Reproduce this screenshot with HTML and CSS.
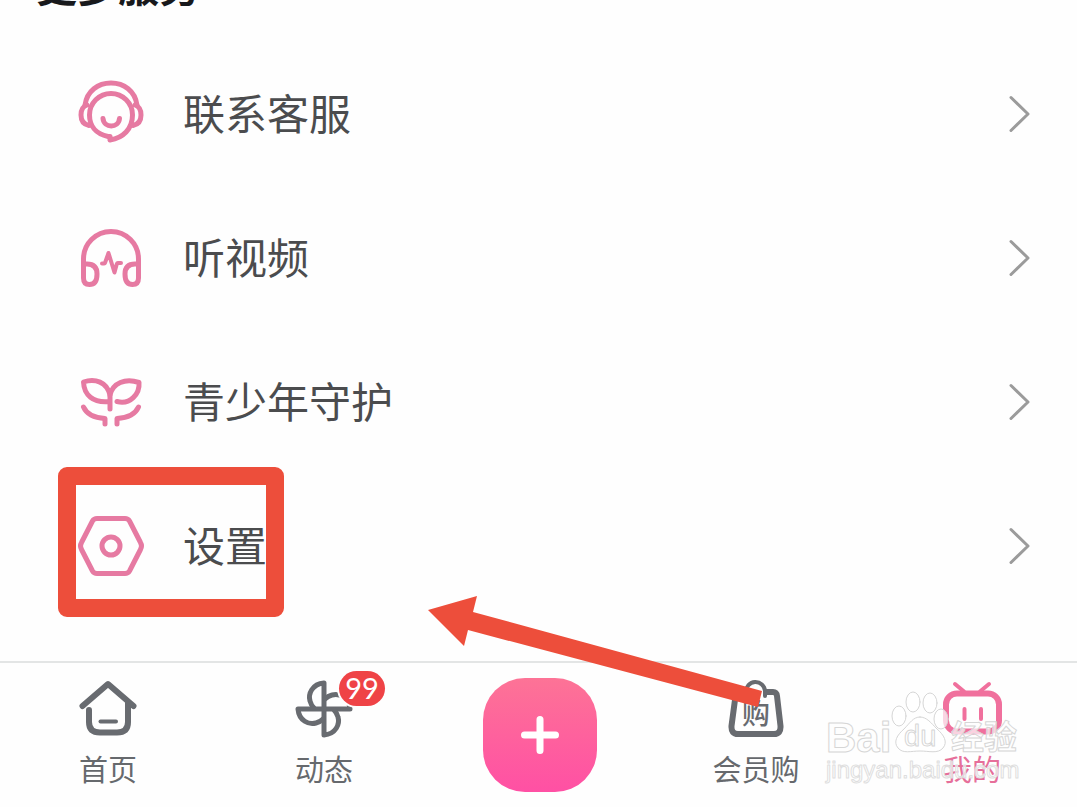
FILE: index.html
```html
<!DOCTYPE html>
<html lang="zh-CN">
<head>
    <meta charset="UTF-8">
    <meta name="viewport" content="width=device-width, initial-scale=1.0">
    <title>我的</title>
    <link rel="stylesheet" href="styles.css">
</head>
<body>
    <main class="services">
        <h2>更多服务</h2>
        <a class="row" href="#service">
            <svg class="row-icon" viewBox="0 0 72 72">
                <path d="M33 58.500C21 56 14.500 48 14.500 37A21.500 21.500 0 0 1 57.500 37C57.500 51 48 60 35 62L35 58.500Z"/>
                <path d="M10 27C12 13 23 5 36 5S60 13 62 27"/>
                <path d="M12 27Q6 29 6 37Q6 46 14 47.500M60 27Q66 29 66 37Q66 46 58 47.500"/>
                <path d="M28 40.500C29 50.500 43.500 50.500 44.500 40.500"/>
            </svg>
            <span class="row-label">联系客服</span>
            <svg class="chevron" viewBox="0 0 24 40"><path d="M3 3.500L20 20L3 36.500"/></svg>
        </a>
        <a class="row" href="#listen">
            <svg class="row-icon" viewBox="0 0 72 72">
                <path d="M8.500 42H12Q22 42 22 52Q22 62.500 14.500 62.500Q8.500 62.500 8.500 56V37A27.500 27.500 0 0 1 63.500 37V56Q63.500 62.500 57.500 62.500Q50 62.500 50 52Q50 42 60 42H63.500"/>
                <path class="pulse" d="M27 41.500H29Q30 41.500 30.500 39.500L33.500 31L39.500 50.500L41.500 43Q42 41 43 41H46"/>
            </svg>
            <span class="row-label">听视频</span>
            <svg class="chevron" viewBox="0 0 24 40"><path d="M3 3.500L20 20L3 36.500"/></svg>
        </a>
        <a class="row" href="#teen">
            <svg class="row-icon" viewBox="0 0 72 72">
                <path d="M35 43V29C32 16 20 12 8.500 16C9 29 18 37 34 35.500"/>
                <path d="M35 29C38 17 50 12 64 16.500C65 28 55 39 42 35.500"/>
                <path d="M8.500 41C12 49 20 52 30 52.500V58M63.500 41C60 49 52 52 42 52.500V58"/>
            </svg>
            <span class="row-label">青少年守护</span>
            <svg class="chevron" viewBox="0 0 24 40"><path d="M3 3.500L20 20L3 36.500"/></svg>
        </a>
        <a class="row" href="#settings">
            <svg class="row-icon" viewBox="0 0 72 72">
                <path d="M22 8.500H50Q53 8.500 54.500 11L65.500 32.500Q67.500 36 65.500 39.500L54.500 61Q53 63.500 50 63.500H22Q19 63.500 17.500 61L6.500 39.500Q4.500 36 6.500 32.500L17.500 11Q19 8.500 22 8.500Z"/>
                <circle cx="36" cy="36" r="9"/>
            </svg>
            <span class="row-label">设置</span>
            <svg class="chevron" viewBox="0 0 24 40"><path d="M3 3.500L20 20L3 36.500"/></svg>
            <span class="highlight"></span>
        </a>
    </main>

    <nav class="tabbar">
        <div class="tabs">
            <a class="tab" href="#home">
                <svg class="tab-icon" viewBox="0 0 64 64">
                    <path d="M6.500 28L32 6L57.500 28M13 32V44Q13 54.500 24 54.500H41Q52 54.500 52 44V25"/>
                    <path class="thin" d="M24.500 43.500H40"/>
                </svg>
                <span>首页</span>
            </a>
            <a class="tab" href="#feed">
                <svg class="tab-icon fan" viewBox="0 0 64 64">
                    <path d="M32 31V5C20 6 16 16 18 23Q19 27 22 30"/>
                    <path d="M32 31V5C20 6 16 16 18 23Q19 27 22 30" transform="rotate(90 32 31)"/>
                    <path d="M32 31V5C20 6 16 16 18 23Q19 27 22 30" transform="rotate(180 32 31)"/>
                    <path d="M32 31V5C20 6 16 16 18 23Q19 27 22 30" transform="rotate(270 32 31)"/>
                </svg>
                <span>动态</span>
                <span class="badge">99</span>
            </a>
            <div class="tab-center">
                <button class="add" type="button" aria-label="发布">
                    <svg viewBox="0 0 40 40"><path d="M20 4.500V35.500M4.500 20H35.500"/></svg>
                </button>
            </div>
            <a class="tab" href="#mall">
                <svg class="tab-icon" viewBox="0 0 64 64">
                    <path d="M18 14H15Q12 14 11.500 18L7.500 48Q7 56 14 56H50Q57 56 56.500 48L53 18Q52.500 14 49 14H42"/>
                    <path class="thin" d="M22 16V14A9.500 9.500 0 0 1 41 13V18"/>
                    <text x="18" y="46">购</text>
                </svg>
                <span>会员购</span>
            </a>
            <a class="tab active" href="#mine">
                <svg class="tab-icon" viewBox="0 0 64 64">
                    <rect x="6" y="15.500" width="53" height="38" rx="11"/>
                    <path class="thin" d="M15 6L24 13.500M49 6L40 13.500M24.500 31V41M41 31V41"/>
                </svg>
                <span>我的</span>
            </a>
        </div>

        <svg class="arrow" viewBox="0 0 340 114">
            <path d="M2 14L51 0L47 16L336 95L332 111L42 34L38 50Z"/>
        </svg>

        <svg class="watermark" viewBox="0 0 210 105">
            <ellipse cx="79" cy="31" rx="7" ry="10"/>
            <ellipse cx="93" cy="17" rx="7" ry="10"/>
            <ellipse cx="110" cy="18" rx="7" ry="10"/>
            <ellipse cx="121" cy="34" rx="7" ry="10"/>
            <path d="M100 32C107 32 111 38 117 44C124 50 128 57 123 63C118 69 109 66 100 66S83 69 78 63C73 57 77 50 84 44C90 38 93 32 100 32Z"/>
            <text class="wm-latin" x="6" y="67">Bai</text>
            <text class="wm-du" x="84" y="61">du</text>
            <text class="wm-cjk" x="131" y="64">经验</text>
            <text class="wm-url" x="6" y="93">jingyan.baidu.com</text>
        </svg>
    </nav>
</body>
</html>
```
FILE: styles.css
```css
* {
    box-sizing: border-box;
}
body {
    display: flex;
    flex-direction: column;
    height: 100vh;
    margin: 0;
    overflow: hidden;
    background-color: #fefefe;
    font-family: "Noto Sans CJK SC", sans-serif;
}
a {
    color: inherit;
    text-decoration: none;
}
svg {
    fill: none;
    stroke-linecap: round;
    stroke-linejoin: round;
}

/* list, scrolled to its end */
.services {
    flex: 1;
    min-height: 0;
    display: flex;
    flex-direction: column;
    justify-content: flex-end;
    padding-bottom: 43px;
    overflow: hidden;
}
h2 {
    flex-shrink: 0;
    margin: 0 36px 30px;
    font-size: 41px;
    line-height: 56px;
    font-weight: 700;
    color: #18191c;
}
.row {
    position: relative;
    flex-shrink: 0;
    display: flex;
    align-items: center;
    gap: 36px;
    height: 144px;
    padding: 0 45px 0 75px;
}
.row-icon {
    width: 72px;
    height: 72px;
    stroke: #e67aa2;
    stroke-width: 5;
}
.row-icon .pulse {
    stroke-width: 4;
}
.row-label {
    flex: 1;
    padding-bottom: 4px;
    font-size: 42px;
    line-height: 60px;
    color: #4b4c4e;
}
.chevron {
    width: 24px;
    height: 40px;
    stroke: #9b9b9b;
    stroke-width: 3;
}
.highlight {
    position: absolute;
    left: 58px;
    top: -7px;
    width: 226px;
    height: 150px;
    border: 18px solid #ed4e3b;
    border-radius: 9px;
}

/* bottom bar */
.tabbar {
    position: relative;
    flex-shrink: 0;
    border-top: 2px solid #e3e5e5;
}
.tabs {
    display: grid;
    grid-template-columns: repeat(5, 1fr);
    margin-right: -3px;
    padding: 15px 0;
}
.tab {
    position: relative;
    display: flex;
    flex-direction: column;
    align-items: center;
    gap: 6px;
    font-size: 29px;
    line-height: 40px;
    color: #66696d;
}
.tab-icon {
    width: 64px;
    height: 64px;
    stroke: #686b70;
    stroke-width: 6;
}
.tab-icon .thin {
    stroke-width: 4;
}
.fan {
    stroke-width: 5;
}
.tab-icon text {
    font-size: 28px;
    font-weight: 500;
    fill: #686b70;
    stroke: none;
}
.active {
    color: #e66f9a;
}
.active .tab-icon {
    stroke: #f0709d;
}
.badge {
    position: absolute;
    left: calc(50% + 15px);
    top: -7px;
    width: 46px;
    height: 35px;
    border-radius: 18px;
    background-color: #ef4346;
    box-shadow: 0 0 0 2px #fefefe;
    color: #fff;
    font-family: Lato, sans-serif;
    font-size: 29px;
    line-height: 34px;
    text-align: center;
}
.tab-center {
    display: flex;
    justify-content: center;
}
.add {
    display: flex;
    align-items: center;
    justify-content: center;
    width: 114px;
    height: 114px;
    padding: 0;
    border: none;
    border-radius: 42px;
    background: linear-gradient(#fd7396, #ff50a4);
    cursor: pointer;
}
.add svg {
    width: 40px;
    height: 40px;
    stroke: #fff;
    stroke-width: 7;
}

/* marks drawn over the page */
.arrow {
    position: absolute;
    left: 426px;
    top: -67px;
    width: 340px;
    height: 114px;
    fill: #ed4e3b;
    pointer-events: none;
}
.watermark {
    position: absolute;
    right: 47px;
    top: 22px;
    width: 210px;
    height: 105px;
    fill: rgba(255, 255, 255, 0.7);
    stroke: #d6d6d6;
    stroke-width: 1;
    pointer-events: none;
}
.wm-latin {
    font: 700 42px "Liberation Sans", sans-serif;
}
.wm-du {
    font: 29px "Liberation Sans", sans-serif;
}
.wm-cjk {
    font: 700 33px "Noto Sans CJK SC", sans-serif;
}
.wm-url {
    font: 24px "Liberation Sans", sans-serif;
    stroke: #dedede;
}
```
